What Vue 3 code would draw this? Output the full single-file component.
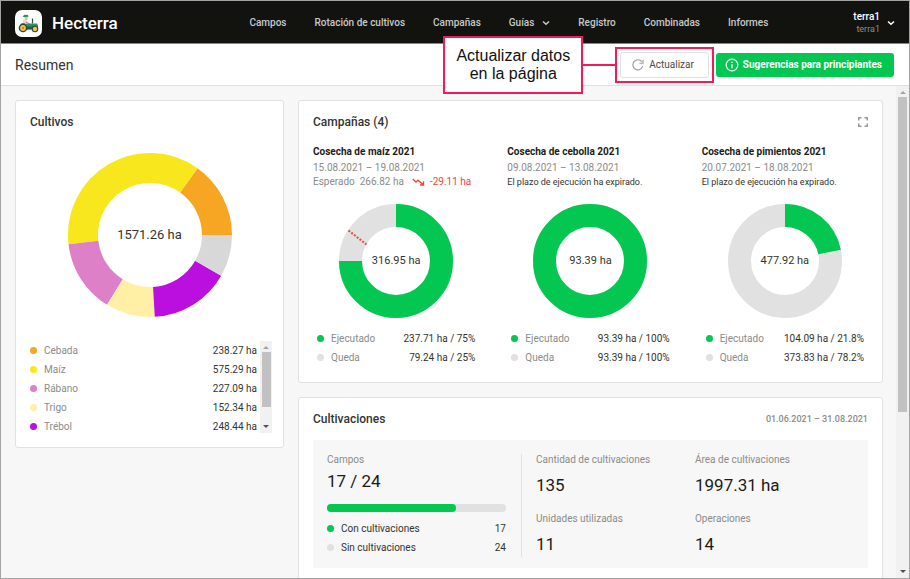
<template>
  <div class="app">
    <header class="topbar">
      <a href="#" class="brand">
        <svg class="logo" viewBox="0 0 27 27" aria-hidden="true">
          <rect width="27" height="27" rx="7" fill="#fff" />
          <path d="M7.500 6.500 L9.500 4.800 L13 5 L13.500 6.800 L10 7.200 Z" fill="#1f9d4d" />
          <path d="M9.500 7 h3 v3 h-2.500 z" fill="#e9b598" />
          <path d="M8 9.500 l3.500 .5 2.500 3.500 -1 1.500 h-5 z" fill="#e6d5d8" />
          <path d="M11 12 l3 2" stroke="#c9606b" stroke-width="1" />
          <path d="M17.500 8.500 v5" stroke="#2c4a43" stroke-width="1.200" />
          <path d="M5 14.500 q3 -2.500 6 -.5 l3 -.5 h8 l1 2 v3.500 h-4 l-8 .5 z" fill="#24985a" />
          <path d="M12 16.500 h7 v3 h-7 z" fill="#31584d" />
          <circle cx="8" cy="18" r="4.300" fill="#33443d" />
          <circle cx="8" cy="18" r="2.900" fill="#efc33c" />
          <circle cx="8" cy="18" r="1" fill="#a8812a" />
          <circle cx="20" cy="19" r="3.300" fill="#33443d" />
          <circle cx="20" cy="19" r="2.200" fill="#efc33c" />
        </svg>
        <span>Hecterra</span>
      </a>
      <nav class="nav">
        <a v-for="item in navItems" :key="item.label" href="#">
          {{ item.label }}
          <svg v-if="item.menu" class="chevron" viewBox="0 0 8 6" aria-hidden="true"><path d="M1 1.500 L4 4.300 L7 1.500" /></svg>
        </a>
      </nav>
      <button type="button" class="user">
        <span class="user-names">
          <span>terra1</span>
          <small>terra1</small>
        </span>
        <svg class="chevron" viewBox="0 0 8 6" aria-hidden="true"><path d="M1 1.500 L4 4.300 L7 1.500" /></svg>
      </button>
    </header>

    <div class="subbar">
      <h1>Resumen</h1>
      <div class="actions">
        <div class="refresh">
          <button type="button" class="btn">
            <svg class="refresh-icon" viewBox="0 0 12 12" aria-hidden="true">
              <path d="M10.700 7.200 A5 5 0 1 1 9.800 2.700" />
              <path d="M11 .8 V4.300 H7.500" />
            </svg>
            Actualizar
          </button>
          <div class="highlight"></div>
          <div class="callout">Actualizar datos<br />en la página</div>
        </div>
        <button type="button" class="btn btn-green">
          <svg class="info-icon" viewBox="0 0 14 14" aria-hidden="true">
            <circle cx="7" cy="7" r="5.800" />
            <path d="M7 6.300 V10.200 M7 3.700 V5" />
          </svg>
          Sugerencias para principiantes
        </button>
      </div>
    </div>

    <div class="body">
      <main class="content">
        <!-- Crops -->
        <section class="card crops">
          <h2>Cultivos</h2>
          <div class="donut donut-lg">
            <svg viewBox="0 0 164 164" aria-hidden="true">
              <path v-for="s in cropSlices" :key="s.name" :d="s.d" :stroke="s.color" stroke-width="30" fill="none" />
            </svg>
            <span class="donut-label">1571.26 ha</span>
          </div>
          <div class="crop-list">
            <ul class="legend">
              <li v-for="c in crops.slice(0, 5)" :key="c.name">
                <i class="dot" :style="{ background: c.color }"></i>
                <span class="muted">{{ c.name }}</span>
                <span class="value">{{ c.area.toFixed(2) }} ha</span>
              </li>
            </ul>
            <div class="scrollbar">
              <i class="arrow up"></i>
              <i class="thumb thumb-list"></i>
              <i class="arrow down"></i>
            </div>
          </div>
        </section>

        <div class="column">
          <!-- Campaigns -->
          <section class="card">
            <div class="card-head">
              <h2>Campañas (4)</h2>
              <button type="button" class="expand" aria-label="Expandir">
                <svg viewBox="0 0 10 10" aria-hidden="true">
                  <path d="M.75 3.500 V.75 H3.500 M6.500 .75 H9.250 V3.500 M9.250 6.500 V9.250 H6.500 M3.500 9.250 H.75 V6.500" />
                </svg>
              </button>
            </div>
            <div class="campaigns">
              <article v-for="c in campaigns" :key="c.name">
                <h3>{{ c.name }}</h3>
                <p class="dates">{{ c.dates }}</p>
                <p v-if="c.expected" class="note muted">
                  <span>Esperado</span>
                  <span>{{ c.expected }}</span>
                  <svg class="trend" viewBox="0 0 13 8" aria-hidden="true">
                    <path d="M.8 1 L4 4 L6 2.200 L11 6.500 M11.500 3.300 V7 H8" />
                  </svg>
                  <span class="red">{{ c.diff }}</span>
                </p>
                <p v-else class="note expired">El plazo de ejecución ha expirado.</p>
                <div class="donut donut-sm">
                  <svg viewBox="0 0 114 114" aria-hidden="true">
                    <circle cx="57" cy="57" r="45.500" stroke="#e1e1e1" stroke-width="23" fill="none" />
                    <circle
                      cx="57" cy="57" r="45.500" stroke="#03c751" stroke-width="23" fill="none"
                      pathLength="100" :stroke-dasharray="`${c.done} ${c.done < 100 ? 100 : 0}`" transform="rotate(-90 57 57)"
                    />
                    <path v-if="c.expected" d="M9.500 26.500 L27.500 40.500" stroke="#f04438" stroke-width="2" stroke-dasharray="2 1.500" />
                  </svg>
                  <span class="donut-label">{{ c.total }}</span>
                </div>
                <ul class="legend">
                  <li>
                    <i class="dot green"></i>
                    <span class="muted">Ejecutado</span>
                    <span class="value">{{ c.executed }}</span>
                  </li>
                  <li>
                    <i class="dot gray"></i>
                    <span class="muted">Queda</span>
                    <span class="value">{{ c.left }}</span>
                  </li>
                </ul>
              </article>
            </div>
          </section>

          <!-- Cultivations -->
          <section class="card">
            <div class="card-head">
              <h2>Cultivaciones</h2>
              <span class="period">01.06.2021 – 31.08.2021</span>
            </div>
            <div class="panel">
              <div class="fields">
                <div class="label">Campos</div>
                <div class="big">17 / 24</div>
                <div class="bar"><div class="bar-fill" :style="{ width: fieldShare + '%' }"></div></div>
                <ul class="legend">
                  <li>
                    <i class="dot green"></i>
                    <span>Con cultivaciones</span>
                    <span class="value">17</span>
                  </li>
                  <li>
                    <i class="dot gray"></i>
                    <span>Sin cultivaciones</span>
                    <span class="value">24</span>
                  </li>
                </ul>
              </div>
              <div class="stats">
                <div v-for="s in stats" :key="s.label">
                  <div class="label">{{ s.label }}</div>
                  <div class="big">{{ s.value }}</div>
                </div>
              </div>
            </div>
          </section>
        </div>
      </main>
      <div class="scrollbar scrollbar-page">
        <i class="arrow up"></i>
        <i class="thumb thumb-page"></i>
        <i class="arrow down"></i>
      </div>
    </div>
  </div>
</template>

<script setup>
import { computed } from 'vue'

const navItems = [
  { label: 'Campos' },
  { label: 'Rotación de cultivos' },
  { label: 'Campañas' },
  { label: 'Guías', menu: true },
  { label: 'Registro' },
  { label: 'Combinadas' },
  { label: 'Informes' },
]

const crops = [
  { name: 'Cebada', area: 238.27, color: '#f6a623' },
  { name: 'Maíz', area: 575.29, color: '#f8e71c' },
  { name: 'Rábano', area: 227.09, color: '#de80c8' },
  { name: 'Trigo', area: 152.34, color: '#fff0a6' },
  { name: 'Trébol', area: 248.44, color: '#bb0fe0' },
  { name: 'Otros', area: 129.83, color: '#d8d8d8' },
]

// Slices run counterclockwise, starting at three o'clock
const cropSlices = computed(() => {
  const total = crops.reduce((sum, c) => sum + c.area, 0)
  const point = a => `${82 + 67 * Math.cos(a)} ${82 - 67 * Math.sin(a)}`
  let angle = 0
  return crops.map(c => {
    const start = angle
    angle += (c.area / total) * Math.PI * 2
    return { ...c, d: `M${point(start)} A67 67 0 0 0 ${point(angle)}` }
  })
})

const campaigns = [
  {
    name: 'Cosecha de maíz 2021', dates: '15.08.2021 – 19.08.2021', expected: '266.82 ha', diff: '-29.11 ha',
    total: '316.95 ha', done: 75, executed: '237.71 ha / 75%', left: '79.24 ha / 25%',
  },
  {
    name: 'Cosecha de cebolla 2021', dates: '09.08.2021 – 13.08.2021',
    total: '93.39 ha', done: 100, executed: '93.39 ha / 100%', left: '93.39 ha / 100%',
  },
  {
    name: 'Cosecha de pimientos 2021', dates: '20.07.2021 – 18.08.2021',
    total: '477.92 ha', done: 21.8, executed: '104.09 ha / 21.8%', left: '373.83 ha / 78.2%',
  },
]

const fieldShare = computed(() => (17 / 24) * 100 + 1)

const stats = [
  { label: 'Cantidad de cultivaciones', value: '135' },
  { label: 'Área de cultivaciones', value: '1997.31 ha' },
  { label: 'Unidades utilizadas', value: '11' },
  { label: 'Operaciones', value: '14' },
]
</script>

<style scoped>
* { box-sizing: border-box; }
h1, h2, h3, p, ul { margin: 0; padding: 0; }
ul { list-style: none; }
a { color: inherit; text-decoration: none; }
button { font: inherit; cursor: pointer; }

.app { height: 100vh; display: flex; flex-direction: column; border: 1px solid #a3a3a3; background: #f7f7f7; color: #33342f; font-family: Roboto, "Liberation Sans", sans-serif; font-size: 10px; line-height: 14px; overflow: hidden; }

/* Top bar */
.topbar { flex: none; height: 43px; display: flex; align-items: center; padding: 2px 14px 0; background: #12130f; color: #fff; border-bottom: 1px solid #85868a; }
.brand { display: flex; align-items: center; gap: 10px; font-size: 17px; line-height: 20px; font-weight: 500; }
.logo { width: 27px; height: 27px; }
.nav { display: flex; gap: 28px; margin-left: auto; font-weight: 500; color: #c9c9c8; white-space: nowrap; }
.nav a { display: flex; align-items: center; gap: 8px; }
.chevron { width: 8px; height: 6px; fill: none; stroke: currentColor; stroke-width: 1.5; }
.user { display: flex; align-items: center; gap: 7px; margin-left: 85px; padding: 0; border: 0; background: none; color: #fff; }
.user-names { display: flex; flex-direction: column; text-align: right; font-weight: 500; line-height: 12px; }
.user-names small { font-size: 9px; font-weight: 400; color: #8e8e8c; }

/* Sub bar */
.subbar { flex: none; height: 42px; display: flex; align-items: center; justify-content: space-between; padding: 0 15px 0 14px; background: #fff; border-bottom: 1px solid #e1e1e1; }
.subbar h1 { font-size: 14px; line-height: 18px; font-weight: 400; }
.actions { display: flex; align-items: center; gap: 7px; }
.btn { display: flex; align-items: center; gap: 5px; height: 26px; padding: 0 14px 0 11px; border: 1px solid #e1e1e1; border-radius: 3px; background: #fff; color: #4a4b47; white-space: nowrap; }
.btn-green { height: 24px; padding: 0 12px 0 9px; gap: 4px; border: 0; background: #03c751; color: #fff; font-weight: 700; }
.refresh-icon { width: 12px; height: 12px; fill: none; stroke: #9a9a9a; stroke-width: 1.1; }
.info-icon { width: 14px; height: 14px; fill: none; stroke: #fff; stroke-width: 1.3; }
.refresh { position: relative; }
.highlight { position: absolute; inset: -5px; border: 2px solid #f01d54; pointer-events: none; }
.highlight::before { content: ""; position: absolute; right: 100%; top: 15px; width: 34px; height: 2px; background: #f01d54; }
.callout { position: absolute; right: calc(100% + 37px); top: -16px; padding: 9px 11px; border: 2px solid #f01d54; background: #fff; color: #111; font-family: "Liberation Sans", Arial, sans-serif; font-size: 16px; line-height: 18px; text-align: center; white-space: nowrap; }

/* Body */
.body { flex: 1; min-height: 0; display: flex; }
.content { flex: 1; min-width: 0; display: grid; grid-template-columns: 269px minmax(0, 1fr); align-items: start; gap: 14px; padding: 14px 13px 0 14px; overflow: hidden; }
.column { display: flex; flex-direction: column; gap: 14px; }
.card { padding: 13px 14px 15px; border: 1px solid #e1e1e1; border-radius: 3px; background: #fff; }
.crops { padding-bottom: 14px; }
.card h2 { font-size: 12px; line-height: 16px; font-weight: 500; }
.card-head { display: flex; align-items: center; justify-content: space-between; }
.period { font-size: 9px; font-weight: 500; color: #8b8b89; }
.expand { display: flex; padding: 0; border: 0; background: none; }
.expand svg { width: 10px; height: 10px; fill: none; stroke: #999; stroke-width: 1.5; }

.muted { color: #8b8b89; }
.red { color: #f04438; }

.donut { position: relative; margin: 0 auto; }
.donut svg { display: block; width: 100%; height: 100%; }
.donut-label { position: absolute; inset: 0; display: flex; align-items: center; justify-content: center; }
.donut-lg { width: 164px; height: 164px; margin-top: 23px; font-size: 13px; }
.donut-sm { width: 114px; height: 114px; margin-top: 15px; font-size: 11px; }

.legend li { display: flex; align-items: center; height: 19px; }
.legend .value { margin-left: auto; }
.dot { width: 7px; height: 7px; margin-right: 7px; border-radius: 50%; }
.dot.green { background: #03c751; }
.dot.gray { background: #e1e1e1; }

.crop-list { display: flex; gap: 3px; height: 92px; margin-top: 24px; margin-right: -3px; overflow: hidden; }
.crop-list .legend { flex: 1; }

/* Campaigns */
.campaigns { display: grid; grid-template-columns: repeat(3, minmax(0, 1fr)); gap: 28px; margin-top: 14px; }
.campaigns h3 { font-size: 10px; line-height: 16px; font-weight: 700; color: #1b1c18; white-space: nowrap; }
.dates { line-height: 15px; color: #8b8b89; }
.note { display: flex; align-items: center; gap: 5px; height: 14px; white-space: nowrap; }
.expired { font-size: 9px; }
.trend { width: 13px; height: 8px; margin-left: 3px; fill: none; stroke: #f04438; stroke-width: 1.4; }
.campaigns .legend { margin: 11px 4px 0; }

/* Cultivations */
.panel { display: flex; margin-top: 13px; padding: 14px 14px 11px; background: #f7f7f7; }
.fields { flex: 0 0 37%; padding-right: 15px; border-right: 1px solid #e1e1e1; }
.label { line-height: 12px; color: #8b8b89; }
.big { font-size: 17px; line-height: 20px; color: #1b1c18; }
.fields .big { margin-top: 5px; }
.bar { height: 8px; margin: 13px 0 7px; border-radius: 4px; background: #e1e1e1; }
.bar-fill { height: 100%; border-radius: 4px; background: #03c751; }
.stats { flex: 1; display: grid; grid-template-columns: 1fr 1fr; align-content: start; row-gap: 18px; padding-left: 14px; }
.stats .big { margin-top: 9px; }

/* Scrollbars */
.scrollbar { flex: none; width: 12px; display: flex; flex-direction: column; align-items: center; background: #f1f1f1; }
.scrollbar-page { width: 13px; }
.arrow { width: 0; height: 0; border: 3px solid transparent; }
.arrow.up { margin: 5px 0 3px; border-bottom-color: #a3a3a3; border-top-width: 0; }
.arrow.down { margin-top: auto; margin-bottom: 5px; border-top-color: #505050; border-bottom-width: 0; }
.thumb { width: 9px; background: #c1c1c1; }
.thumb-list { height: 55px; }
.thumb-page { height: 64%; }
</style>

<style>
body { margin: 0; }
</style>
